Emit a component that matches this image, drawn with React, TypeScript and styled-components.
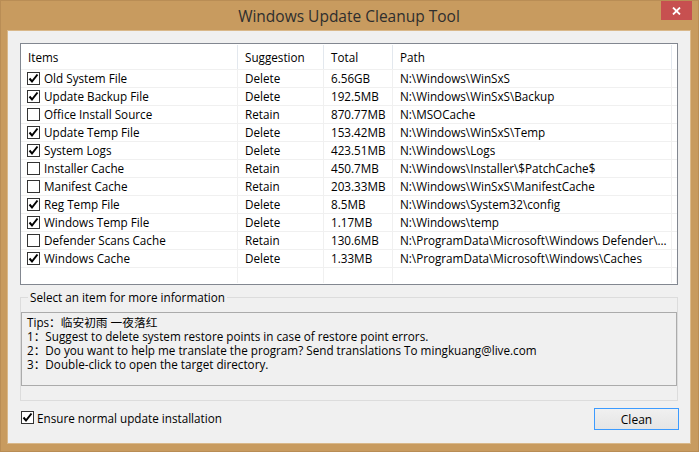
import React from "react";
import styled, { createGlobalStyle } from "styled-components";

const GlobalStyle = createGlobalStyle`
  html, body { margin: 0; padding: 0; }
  body {
    font-family: "Open Sans", "Noto Sans CJK SC", sans-serif;
    font-size: 11.7px;
    color: #000;
  }
  * { box-sizing: border-box; }
`;

const Window = styled.div`
  width: 699px;
  height: 452px;
  background: #c89b5f;
  border: 1px solid #b98d55;
  display: flex;
  flex-direction: column;
  padding: 0 7px 7px 6px;
`;

const TitleBar = styled.div`
  height: 29px;
  display: grid;
  grid-template-columns: 1fr auto 1fr;
  align-items: center;
`;

const Title = styled.div`
  grid-column: 2;
  font-size: 15.5px;
  color: #2e2e2e;
  line-height: 20px;
`;

const CloseButton = styled.div`
  grid-column: 3;
  justify-self: end;
  align-self: start;
  width: 31px;
  height: 19px;
  margin-right: -1px;
  background: #c75050;
  color: #fff;
  display: flex;
  align-items: center;
  justify-content: center;
`;

const Client = styled.div`
  flex: 1;
  background: #f0f0f0;
  border: 1px solid #d9b88a;
  display: flex;
  flex-direction: column;
  padding: 12px 12px 0 12px;
`;

const List = styled.div`
  height: 242px;
  border: 1px solid #828790;
  background: #fff;
  display: flex;
  flex-direction: column;
  overflow: hidden;
`;

const COLS = "217px 86px 69px 279px 1fr";

const HeaderRow = styled.div`
  display: grid;
  grid-template-columns: ${COLS};
  height: 25px;
  padding-top: 1px;
`;

const HeaderCell = styled.div`
  border-right: 1px solid #e3e8ee;
  padding-left: 7px;
  display: flex;
  align-items: center;
  white-space: nowrap;
  overflow: hidden;
`;

const Row = styled.div`
  display: grid;
  grid-template-columns: ${COLS};
  height: 18px;
  border-top: 1px solid #f0f0f0;
`;

const Cell = styled.div<{ $item?: boolean }>`
  border-right: 1px solid #f0f0f0;
  padding-left: ${(p) => (p.$item ? "6px" : "7px")};
  display: flex;
  align-items: center;
  gap: 4px;
  white-space: nowrap;
  overflow: hidden;
  line-height: 17px;
`;

const FillerArea = styled.div`
  flex: 1;
  display: grid;
  grid-template-columns: ${COLS};
  border-top: 1px solid #f0f0f0;
  margin-bottom: 1px;
`;

const FillerCell = styled.div`
  border-right: 1px solid #f0f0f0;
`;

const Box = styled.span`
  width: 13px;
  height: 13px;
  flex: none;
  border: 1px solid #333;
  background: #fff;
  display: inline-flex;
  align-items: center;
  justify-content: center;
`;

const Group = styled.fieldset`
  margin: 4px 0 0 0;
  padding: 0;
  border: 1px solid #dcdcdc;
  min-width: 0;
`;

const Legend = styled.legend`
  margin-left: 7px;
  padding: 0 2px;
  line-height: 16px;
`;

const InfoBox = styled.div`
  margin: 7px 0 14px 0;
  height: 74px;
  border: 1px solid #ababab;
  background: #f0f0f0;
  padding: 2px 5px;
  white-space: nowrap;
`;

const InfoLine = styled.div`
  height: 14px;
  line-height: 14px;
  overflow: visible;
`;

const BottomBar = styled.div`
  margin-top: 7px;
  height: 22px;
  display: flex;
  align-items: center;
  justify-content: space-between;
`;

const CheckLabel = styled.label`
  display: flex;
  align-items: center;
  gap: 3px;
  margin-left: 1px;
  padding-bottom: 3px;
`;

const CleanButton = styled.button`
  width: 85px;
  height: 22px;
  border: 1px solid #3c9bff;
  background: linear-gradient(#f0f0f0, #e5e5e5);
  font-family: inherit;
  font-size: 12px;
  color: #000;
  padding: 0;
  margin-right: -1px;
`;

const CheckBox: React.FC<{ checked: boolean }> = ({ checked }) => (
  <Box>
    {checked && (
      <svg width="11" height="11" viewBox="0 0 11 11">
        <path d="M1.5 5.5 L4 8.5 L9.5 1.5" fill="none" stroke="#000" strokeWidth="2" />
      </svg>
    )}
  </Box>
);

const items: [string, boolean, string, string, string][] = [
  ["Old System File", true, "Delete", "6.56GB", "N:\\Windows\\WinSxS"],
  ["Update Backup File", true, "Delete", "192.5MB", "N:\\Windows\\WinSxS\\Backup"],
  ["Office Install Source", false, "Retain", "870.77MB", "N:\\MSOCache"],
  ["Update Temp File", true, "Delete", "153.42MB", "N:\\Windows\\WinSxS\\Temp"],
  ["System Logs", true, "Delete", "423.51MB", "N:\\Windows\\Logs"],
  ["Installer Cache", false, "Retain", "450.7MB", "N:\\Windows\\Installer\\$PatchCache$"],
  ["Manifest Cache", false, "Retain", "203.33MB", "N:\\Windows\\WinSxS\\ManifestCache"],
  ["Reg Temp File", true, "Delete", "8.5MB", "N:\\Windows\\System32\\config"],
  ["Windows Temp File", true, "Delete", "1.17MB", "N:\\Windows\\temp"],
  ["Defender Scans Cache", false, "Retain", "130.6MB", "N:\\ProgramData\\Microsoft\\Windows Defender\\..."],
  ["Windows Cache", true, "Delete", "1.33MB", "N:\\ProgramData\\Microsoft\\Windows\\Caches"],
];

export default function App() {
  return (
    <>
      <GlobalStyle />
      <Window>
        <TitleBar>
          <Title>Windows Update Cleanup Tool</Title>
          <CloseButton>
            <svg width="9" height="8" viewBox="0 0 9 8">
              <path d="M1 0.5 L8 7.5 M8 0.5 L1 7.5" stroke="#fff" strokeWidth="1.8" />
            </svg>
          </CloseButton>
        </TitleBar>
        <Client>
          <List>
            <HeaderRow>
              <HeaderCell>Items</HeaderCell>
              <HeaderCell>Suggestion</HeaderCell>
              <HeaderCell>Total</HeaderCell>
              <HeaderCell>Path</HeaderCell>
              <HeaderCell />
            </HeaderRow>
            {items.map(([name, checked, sug, total, path]) => (
              <Row key={name}>
                <Cell $item>
                  <CheckBox checked={checked} />
                  {name}
                </Cell>
                <Cell>{sug}</Cell>
                <Cell>{total}</Cell>
                <Cell>{path}</Cell>
                <Cell />
              </Row>
            ))}
            <FillerArea>
              <FillerCell />
              <FillerCell />
              <FillerCell />
              <FillerCell />
              <FillerCell />
            </FillerArea>
          </List>
          <Group>
            <Legend>Select an item for more information</Legend>
            <InfoBox>
              <InfoLine>Tips：临安初雨 一夜落红</InfoLine>
              <InfoLine>1：Suggest to delete system restore points in case of restore point errors.</InfoLine>
              <InfoLine>2：Do you want to help me translate the program? Send translations To mingkuang@live.com</InfoLine>
              <InfoLine>3：Double-click to open the target directory.</InfoLine>
            </InfoBox>
          </Group>
          <BottomBar>
            <CheckLabel>
              <CheckBox checked />
              Ensure normal update installation
            </CheckLabel>
            <CleanButton>Clean</CleanButton>
          </BottomBar>
        </Client>
      </Window>
    </>
  );
}
